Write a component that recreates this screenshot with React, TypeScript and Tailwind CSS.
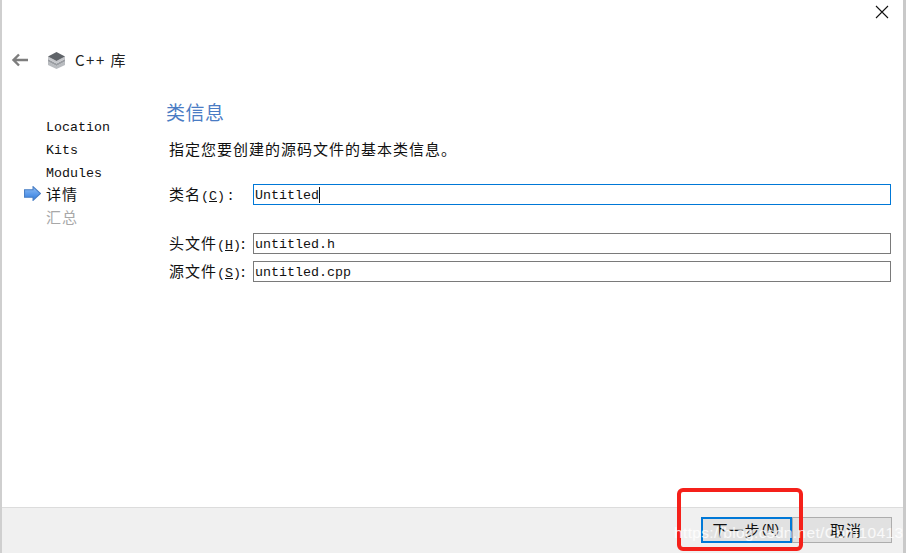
import type { ReactNode } from "react";

const latin = "[font-family:'Liberation_Mono',monospace] text-[13.33px]";

// Latin runs are 8px per char, CJK runs are 16px per char
function Mixed({ text }: { text: string }) {
  const parts = text.match(/[\x20-\x7e]+|[^\x20-\x7e]+/g) ?? [];
  return (
    <>
      {parts.map((p, i) =>
        /^[\x20-\x7e]/.test(p) ? (
          <span key={i} className={latin}>{p}</span>
        ) : (
          <span key={i} className="text-[15px] tracking-[1px]">{p}</span>
        )
      )}
    </>
  );
}

function Label({ name, hot, after }: { name: string; hot: string; after: string }) {
  return (
    <span className="w-[84px] shrink-0 whitespace-nowrap pb-[2px]">
      <Mixed text={name} />
      <span className={latin}>(<span className="underline">{hot}</span>)</span>
      <span className="text-[15px]">{after}</span>
    </span>
  );
}

function Field({ value, focus, children }: { value: string; focus?: boolean; children?: ReactNode }) {
  return (
    <div className={`flex h-[21px] flex-1 items-center border px-[1px] ${focus ? "border-[#0078d7]" : "border-[#7a7a7a]"}`}>
      <span className={`${latin} whitespace-pre pt-[2px] text-[#111]`}>{value}</span>
      {children}
    </div>
  );
}

function StackIcon() {
  return (
    <svg width="19" height="18" viewBox="0 0 19 18">
      <path d="M1 10.5 9.5 15 18 10.5V14L9.5 18 1 14Z" fill="#b9bcc0" />
      <path d="M1 8 9.5 12.5 18 8V10.5L9.5 15 1 10.5Z" fill="#9a9da2" />
      <path d="M1 5.5 9.5 10 18 5.5V8L9.5 12.5 1 8Z" fill="#c4c6ca" />
      <path d="M9.5 1 18 5.5 9.5 10 1 5.5Z" fill="#5f6368" />
    </svg>
  );
}

function StepArrow() {
  return (
    <svg width="17" height="15" viewBox="0 0 16 14">
      <defs>
        <linearGradient id="arrowFill" x1="0" y1="0" x2="0" y2="1">
          <stop offset="0" stopColor="#8fbdf5" />
          <stop offset="1" stopColor="#2f7ce0" />
        </linearGradient>
      </defs>
      <path d="M0.5 3.5H8.5V0.5L15.5 7 8.5 13.5V10.5H0.5Z" fill="url(#arrowFill)" stroke="#4a7fc4" strokeWidth="1" />
    </svg>
  );
}

const steps = ["Location", "Kits", "Modules", "详情", "汇总"];

export default function App() {
  return (
    <div className="flex h-[553px] w-[907px] overflow-hidden bg-white font-['Noto_Sans_CJK_SC',sans-serif] text-[#111]">
      <div className="relative flex w-[906px] flex-col border-r-[3px] border-l-2 border-r-[#c9c9c9] border-l-[#cfcfcf]">
        <div className="flex h-[36px] justify-end pt-[5px] pr-[14px]">
          <svg width="14" height="14" viewBox="0 0 14 14" stroke="#111" strokeWidth="1.1">
            <path d="M1 1 13 13M13 1 1 13" />
          </svg>
        </div>

        <div className="flex h-[48px] items-center pl-[9px]">
          <svg width="18" height="14" viewBox="0 0 18 14" fill="none" stroke="#7d7d7d" strokeWidth="2.4">
            <path d="M17 7H3M8 1.5 2.5 7 8 12.5" />
          </svg>
          <span className="ml-[18px]"><StackIcon /></span>
          <span className="ml-[9px] whitespace-nowrap text-[15px] tracking-[1.5px] text-[#222]">C++ 库</span>
        </div>

        <div className="flex h-[423px]">
          <div className="w-[164px] shrink-0 pt-[29px]">
            {steps.map((s, i) => (
              <div key={s} className="relative flex h-[23px] items-center pl-[44px]">
                {i === 3 && <span className="absolute top-[4px] left-[22px] flex"><StepArrow /></span>}
                <span className={i === 4 ? "text-[#a8a8a8]" : ""}><Mixed text={s} /></span>
              </div>
            ))}
          </div>

          <div className="flex-1 pr-[12px]">
            <div className="mt-[14px] h-[28px] text-[19px] leading-[28px] tracking-[0.5px] text-[#4a7cc4]">类信息</div>
            <div className="mt-[11px] ml-[3px] h-[22px] whitespace-nowrap leading-[22px]">
              <Mixed text="指定您要创建的源码文件的基本类信息。" />
            </div>
            <div className="mt-[25px] ml-[3px] flex h-[21px] items-center">
              <Label name="类名" hot="C" after=" :" />
              <Field value="Untitled" focus>
                <span className="h-[16px] w-px bg-[#111]" />
              </Field>
            </div>
            <div className="mt-[28px] ml-[3px] flex h-[21px] items-center">
              <Label name="头文件" hot="H" after=":" />
              <Field value="untitled.h" />
            </div>
            <div className="mt-[7px] ml-[3px] flex h-[21px] items-center">
              <Label name="源文件" hot="S" after=":" />
              <Field value="untitled.cpp" />
            </div>
          </div>
        </div>

        <div className="flex h-[46px] items-start justify-end border-t border-[#dcdcdc] bg-[#f0f0f0] pt-[9px] pr-[11px]">
          <button className="flex h-[26px] w-[91px] items-center justify-center border-2 border-[#0078d7] bg-[#e1e1e1] pr-[2px]">
            <Mixed text="下一步" />
            <span className={`${latin} tracking-[-2px]`}>(N)</span>
          </button>
          <button className="flex h-[26px] w-[100px] items-center justify-center border border-[#adadad] bg-[#e1e1e1] pl-[8px]">
            <Mixed text="取消" />
          </button>
        </div>

        {/* red annotation and blog watermark lie over the footer */}
        <div className="absolute top-[488px] left-[675px] h-[63px] w-[126px] rounded-[6px] border-4 border-[#f5201a]" />
        <div className="absolute top-[521px] left-[672px] whitespace-nowrap font-['Liberation_Sans',sans-serif] text-[15.5px] tracking-[0.35px] text-white/80">
          https://blog.csdn.net/Com10413
        </div>
      </div>
    </div>
  );
}
